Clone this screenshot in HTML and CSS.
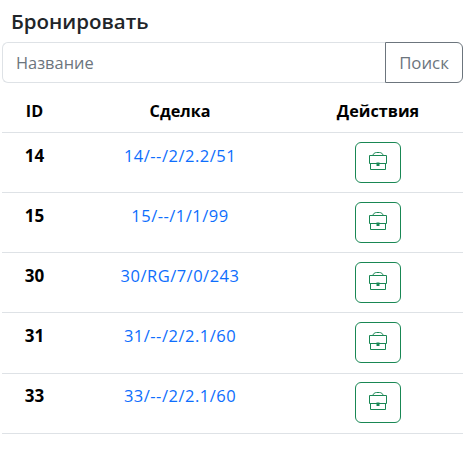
FILE: index.html
```html
<!DOCTYPE html>
<html lang="ru">
<head>
<meta charset="utf-8">
<title>Бронировать</title>
<link rel="stylesheet" href="styles.css">
</head>
<body>
<svg class="sprite" width="0" height="0" aria-hidden="true">
  <symbol id="case" viewBox="0 0 18 18">
    <path d="M4 3.500C4 1.500 6 .5 7.500.5h3C12 .5 14 1.500 14 3.500" fill="none" stroke="currentColor"/>
    <path d="M.5 3.500h17v8H.5zM1.500 11.500v6h15v-6" fill="none" stroke="currentColor"/>
    <rect x="7.500" y="10.500" width="3" height="3.500" fill="currentColor"/>
  </symbol>
</svg>
<main class="page">
  <h1 class="title">Бронировать</h1>
  <form class="search">
    <input class="search-input" type="text" placeholder="Название">
    <button class="search-btn" type="button">Поиск</button>
  </form>
  <table class="deals">
    <thead>
      <tr><th class="col-id">ID</th><th class="col-deal">Сделка</th><th class="col-act">Действия</th></tr>
    </thead>
    <tbody>
      <tr><td class="id">14</td><td class="deal"><a href="#">14/--/2/2.2/51</a></td><td class="act"><button class="book" type="button"><svg class="ico"><use href="#case"/></svg></button></td></tr>
      <tr><td class="id">15</td><td class="deal"><a href="#">15/--/1/1/99</a></td><td class="act"><button class="book" type="button"><svg class="ico"><use href="#case"/></svg></button></td></tr>
      <tr><td class="id">30</td><td class="deal"><a href="#">30/RG/7/0/243</a></td><td class="act"><button class="book" type="button"><svg class="ico"><use href="#case"/></svg></button></td></tr>
      <tr><td class="id">31</td><td class="deal"><a href="#">31/--/2/2.1/60</a></td><td class="act"><button class="book" type="button"><svg class="ico"><use href="#case"/></svg></button></td></tr>
      <tr><td class="id">33</td><td class="deal"><a href="#">33/--/2/2.1/60</a></td><td class="act"><button class="book" type="button"><svg class="ico"><use href="#case"/></svg></button></td></tr>
    </tbody>
  </table>
</main>
</body>
</html>
```
FILE: styles.css
```css
* { box-sizing: border-box; }
body {
  margin: 0;
  background: #fff;
  color: #212529;
  font-family: "Open Sans", "Noto Sans", sans-serif;
  font-size: 16px;
}
.sprite { position: absolute; }
.page { padding: 9px 8px 0 2px; }
.title {
  margin: 0 0 8px 9px;
  font-size: 20.500px;
  line-height: 25px;
  font-weight: 600;
}
.search { display: flex; height: 41px; }
.search-input {
  flex: 1;
  min-width: 0;
  padding: 0 13px;
  border: 1px solid #dee2e6;
  border-right: 0;
  border-radius: 6px 0 0 6px;
  font: inherit;
  font-size: 16.400px;
  color: #212529;
  outline: 0;
}
.search-input::placeholder { color: #6c757d; opacity: 1; }
.search-btn {
  width: 78px;
  padding: 0;
  border: 1px solid #6c757d;
  border-radius: 0 6px 6px 0;
  background: #fff;
  color: #6c757d;
  font: inherit;
  font-size: 16.800px;
}
.deals {
  width: 100%;
  border-collapse: collapse;
  color: #000;
}
th, td { border-bottom: 1px solid #dee2e6; padding: 0; text-align: center; }
th {
  height: 49px;
  padding-top: 7px;
  font-size: 16.200px;
  font-weight: 700;
}
td { height: 60.250px; vertical-align: top; }
.col-id { width: 65px; }
.col-deal { width: 226px; }
.id { padding-top: 11px; font-weight: 700; font-size: 17px; }
.deal { padding-top: 11px; font-size: 16.500px; letter-spacing: .5px; }
.deal a { color: #0d6efd; text-decoration: none; }
.act { padding-top: 9px; }
tr:last-child .id, tr:last-child .deal { padding-top: 10px; }
tr:last-child .act { padding-top: 8px; }
.book {
  display: inline-flex;
  align-items: center;
  justify-content: center;
  width: 46px;
  height: 41px;
  padding: 0;
  border: 1px solid #198754;
  border-radius: 6px;
  background: #fff;
  color: #198754;
  vertical-align: top;
}
.ico { width: 18px; height: 18px; margin-top: -3px; }
```
